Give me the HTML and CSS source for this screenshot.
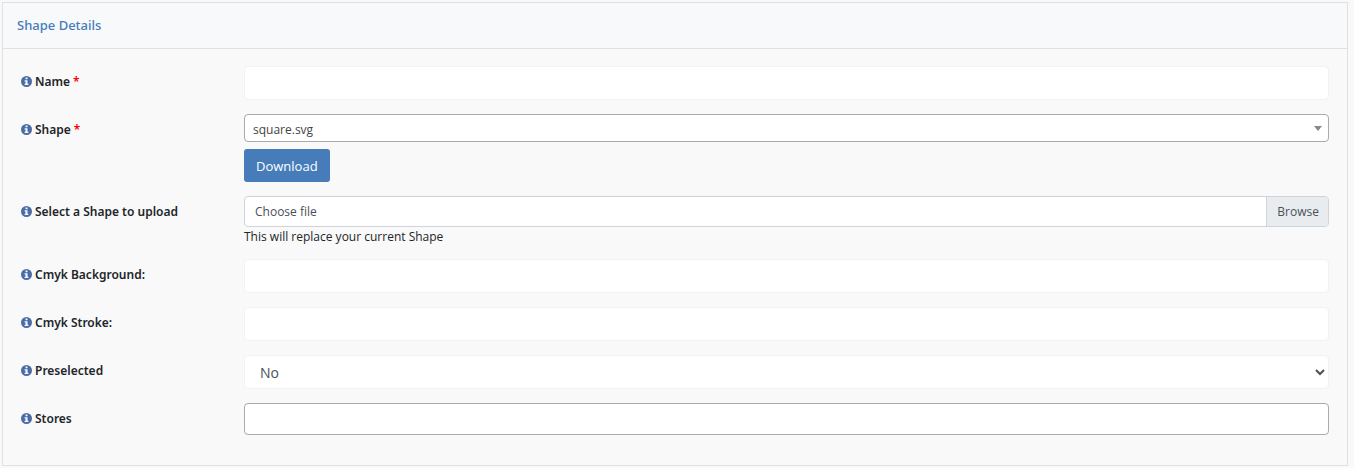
FILE: index.html
```html
<!DOCTYPE html>
<html lang="en">

<head>
    <meta charset="UTF-8">
    <meta name="viewport" content="width=device-width, initial-scale=1">
    <title>Shape Details</title>
    <link rel="stylesheet" href="styles.css">
</head>

<body>
    <svg class="sprite" aria-hidden="true">
        <symbol id="info" viewBox="0 0 11 11">
            <path fill-rule="evenodd" d="M5.5 0a5.5 5.5 0 1 0 0 11 5.5 5.5 0 0 0 0-11zM4.5 1.6h2v1.7h-2zM3.6 4.3h2.9v3.5h.9v1.3H3.6V7.8h.9V5.6h-.9z"/>
        </symbol>
    </svg>

    <form class="card">
        <h1 class="card-header">Shape Details</h1>
        <div class="card-body">
            <div class="form-row">
                <label class="form-label" for="name"><svg class="info"><use href="#info"/></svg>Name <span class="required">*</span></label>
                <div class="form-field">
                    <input type="text" class="form-control" id="name" name="name">
                </div>
            </div>

            <div class="form-row">
                <label class="form-label" for="shape"><svg class="info"><use href="#info"/></svg>Shape <span class="required">*</span></label>
                <div class="form-field">
                    <div class="shape-select">
                        <select id="shape" name="shape">
                            <option>square.svg</option>
                        </select>
                    </div>
                    <button type="button" class="btn">Download</button>
                </div>
            </div>

            <div class="form-row">
                <label class="form-label" for="upload"><svg class="info"><use href="#info"/></svg>Select a Shape to upload</label>
                <div class="form-field">
                    <div class="custom-file">
                        <input type="file" id="upload" name="upload">
                        <span class="file-name">Choose file</span>
                        <span class="file-browse">Browse</span>
                    </div>
                    <p class="help">This will replace your current Shape</p>
                </div>
            </div>

            <div class="form-row">
                <label class="form-label" for="background"><svg class="info"><use href="#info"/></svg>Cmyk Background:</label>
                <div class="form-field">
                    <input type="text" class="form-control" id="background" name="background">
                </div>
            </div>

            <div class="form-row">
                <label class="form-label" for="stroke"><svg class="info"><use href="#info"/></svg>Cmyk Stroke:</label>
                <div class="form-field">
                    <input type="text" class="form-control" id="stroke" name="stroke">
                </div>
            </div>

            <div class="form-row">
                <label class="form-label" for="preselected"><svg class="info"><use href="#info"/></svg>Preselected</label>
                <div class="form-field">
                    <select class="form-control" id="preselected" name="preselected">
                        <option>No</option>
                        <option>Yes</option>
                    </select>
                </div>
            </div>

            <div class="form-row">
                <label class="form-label" for="stores"><svg class="info"><use href="#info"/></svg>Stores</label>
                <div class="form-field">
                    <input type="text" class="stores" id="stores" name="stores">
                </div>
            </div>
        </div>
    </form>
</body>

</html>
```

FILE: styles.css
```css
* {
    box-sizing: border-box;
}

body {
    margin: 0;
    padding: 2px 6px 2px 2px;
    background-color: #f9f9f9;
    color: #212529;
    font-family: "Open Sans", "Noto Sans", sans-serif;
    font-size: 12px;
    line-height: 18px;
}

input,
select,
button {
    font-family: inherit;
}

.sprite {
    display: none;
}

.card {
    border: 1px solid #dee2e6;
}

.card-header {
    margin: 0;
    padding: 12px 14px 13px;
    border-bottom: 1px solid #dee2e6;
    background-color: #f8f9fb;
    color: #467cba;
    font-family: "Noto Sans", sans-serif;
    font-size: 13px;
    font-weight: 500;
    line-height: 20px;
}

.card-body {
    display: flex;
    flex-direction: column;
    gap: 14px;
    padding: 17px 3px 30px;
}

.form-row {
    display: grid;
    grid-template-columns: 1fr 5fr;
    align-items: start;
}

.form-label {
    display: flex;
    align-items: center;
    gap: 3px;
    height: 31px;
    padding: 0 15px;
    font-family: "Noto Sans", sans-serif;
    font-weight: 600;
}

.info {
    width: 11px;
    height: 11px;
    fill: #4a6da7;
}

.required {
    color: #f00;
}

.form-field {
    min-width: 0;
    padding: 0 15px;
}

.form-control,
.stores {
    display: block;
    width: 100%;
    height: 34px;
    padding: 0 11px;
    border: 1px solid #f2f2f2;
    border-radius: 4px;
    background-color: #fff;
    color: #495057;
    font-size: 14px;
}

.stores {
    height: 32px;
    border-color: #aaa;
}

/* dropdown with its own arrow */
.shape-select {
    position: relative;
}

.shape-select select {
    display: block;
    width: 100%;
    height: 28px;
    padding: 2px 20px 0 8px;
    border: 1px solid #aaa;
    border-radius: 4px;
    background-color: #fff;
    color: #444;
    font-size: 12px;
    appearance: none;
}

.shape-select::after {
    content: "";
    position: absolute;
    top: 12px;
    right: 7px;
    border: 4px solid transparent;
    border-top: 5px solid #888;
    border-bottom: 0;
    pointer-events: none;
}

.btn {
    display: block;
    height: 33px;
    margin-top: 7px;
    padding: 0 12px;
    border: 0;
    border-radius: 3px;
    background-color: #467cba;
    color: #fff;
    font-size: 13px;
}

.custom-file {
    position: relative;
    display: flex;
    height: 31px;
    border: 1px solid #ced4da;
    border-radius: 4px;
    background-color: #fff;
    color: #495057;
    line-height: 29px;
    overflow: hidden;
}

.custom-file input {
    position: absolute;
    inset: 0;
    width: 100%;
    opacity: 0;
}

.file-name {
    flex: 1;
    padding: 0 10px;
}

.file-browse {
    padding: 0 9px 0 10px;
    border-left: 1px solid #ced4da;
    background-color: #e9ecef;
}

.help {
    margin: 0;
    padding-top: 1px;
    line-height: 17px;
}
```
